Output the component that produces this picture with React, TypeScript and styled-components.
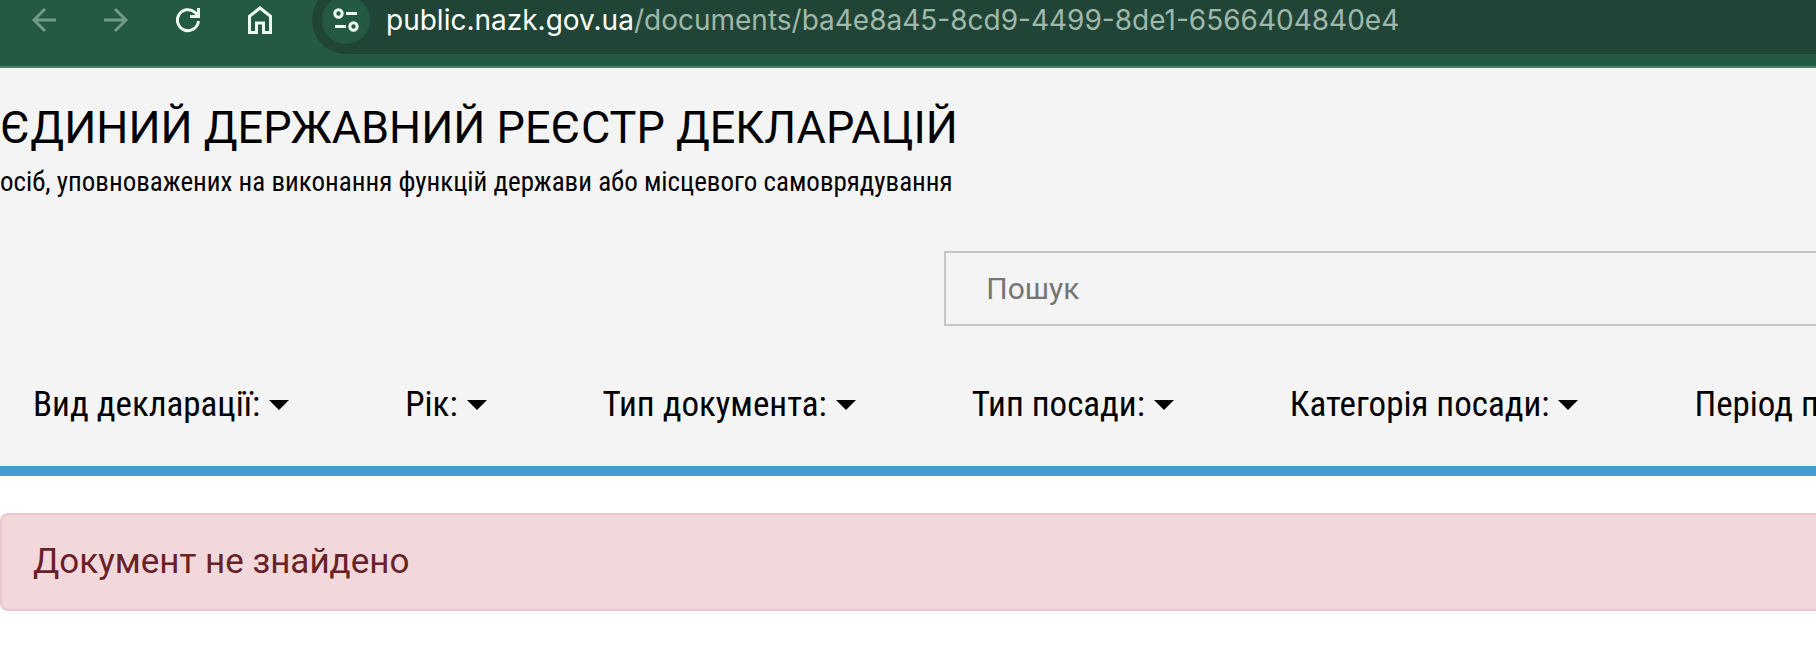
import React from "react";
import styled, { createGlobalStyle } from "styled-components";

const GlobalStyle = createGlobalStyle`
  *, *::before, *::after { box-sizing: border-box; }
  body {
    margin: 0;
    background: #fff;
    color: #000;
    font-family: Roboto, sans-serif;
    overflow-x: hidden;
  }
`;

const condensed = `"Roboto Condensed", Roboto, sans-serif`;

const Toolbar = styled.div`
  display: flex;
  align-items: flex-end;
  height: 68px;
  padding: 0 0 12px 8px;
  border-bottom: 2px solid #4f7e68;
  background: #255a42;
  overflow: hidden;
`;

const ToolButton = styled.button`
  display: flex;
  flex: none;
  align-items: center;
  justify-content: center;
  width: 72px;
  height: 68px;
  padding: 0;
  border: 0;
  background: none;
  color: #effaf3;

  &:disabled { color: #6f9a85; }
`;

const Glyph = styled.svg`
  display: block;
  fill: none;
  stroke: currentColor;
  stroke-width: 3;
`;

const AddressBar = styled.div`
  display: flex;
  flex: 1;
  align-items: center;
  gap: 16px;
  min-width: 0;
  height: 68px;
  margin-left: 16px;
  padding-left: 10px;
  border-radius: 34px 0 0 34px;
  background: #204536;
`;

const SiteInfo = styled.button`
  display: flex;
  flex: none;
  align-items: center;
  justify-content: center;
  width: 48px;
  height: 48px;
  padding: 0;
  border: 0;
  border-radius: 50%;
  background: #255a42;
  color: #effaf3;
`;

const Address = styled.div`
  color: #a0b8ac;
  font: 28px/36px Inter, sans-serif;
  white-space: nowrap;
`;

const Domain = styled.span`
  color: #fff;
`;

const Header = styled.header`
  border-bottom: 10px solid #469ad6;
  background: #f4f4f4;
`;

const Brand = styled.div`
  padding-top: 32px;
`;

const Title = styled.h1`
  margin: 0;
  font-size: 45px;
  font-weight: 400;
  line-height: 56px;
`;

const Subtitle = styled.p`
  margin: 0;
  font: 27px/52px ${condensed};
`;

const SearchInput = styled.input`
  display: block;
  width: 48%;
  height: 75px;
  margin: 43px 0 0 52%;
  padding: 0 40px;
  border: 2px solid #c6c6c6;
  border-right: 0;
  border-radius: 0;
  background: transparent;
  font: 30px Roboto, sans-serif;
  outline: 0;

  &::placeholder { color: #757575; opacity: 1; }
`;

const Filters = styled.nav`
  display: flex;
  gap: 116px;
  padding: 53px 0 35px 33px;
  overflow: hidden;
`;

const FilterButton = styled.button`
  display: flex;
  flex: none;
  align-items: center;
  gap: 9px;
  padding: 0;
  border: 0;
  background: none;
  color: #000;
  font: 35px/52px ${condensed};

  &::after {
    content: "";
    border: 10px solid transparent;
    border-top-color: currentColor;
    border-bottom: 0;
  }
`;

const Alert = styled.div`
  margin-top: 37px;
  padding: 20px 31px;
  border: 2px solid #ebc8cd;
  border-right: 0;
  border-radius: 8px 0 0 8px;
  background: #f2d8db;
  color: #672228;
  font-size: 35px;
  line-height: 54px;
`;

const filters = [
  "Вид декларації:",
  "Рік:",
  "Тип документа:",
  "Тип посади:",
  "Категорія посади:",
  "Період подання:",
];

export default function App() {
  return (
    <>
      <GlobalStyle />
      <Toolbar>
        <ToolButton aria-label="Назад" disabled>
          <Glyph width="26" height="26" viewBox="0 0 26 26">
            <path d="M25 13H3M14 2L3 13l11 11" />
          </Glyph>
        </ToolButton>
        <ToolButton aria-label="Вперед" disabled>
          <Glyph width="26" height="26" viewBox="0 0 26 26">
            <path d="M1 13h22M12 2l11 11-11 11" />
          </Glyph>
        </ToolButton>
        <ToolButton aria-label="Оновити">
          <Glyph width="28" height="28" viewBox="0 0 28 28">
            <path d="M24.4 15A10.5 10.5 0 1 1 21 6.4L23 8.5" />
            <path d="M24.5 2v8.5H16" />
          </Glyph>
        </ToolButton>
        <ToolButton aria-label="Головна">
          <Glyph width="28" height="28" viewBox="0 0 28 28">
            <path d="M3.5 26.5V10.3L14 2l10.5 8.3V26.5H17.5V17h-7V26.5Z" />
          </Glyph>
        </ToolButton>
        <AddressBar>
          <SiteInfo aria-label="Відомості про сайт">
            <Glyph width="26" height="26" viewBox="0 0 26 26">
              <circle cx="5.5" cy="6.5" r="3.7" />
              <path d="M13 6.5h11M2 19.5h11" />
              <circle cx="20.5" cy="19.5" r="3.7" />
            </Glyph>
          </SiteInfo>
          <Address>
            <Domain>public.nazk.gov.ua</Domain>/documents/ba4e8a45-8cd9-4499-8de1-6566404840e4
          </Address>
        </AddressBar>
      </Toolbar>
      <Header>
        <Brand>
          <Title>ЄДИНИЙ ДЕРЖАВНИЙ РЕЄСТР ДЕКЛАРАЦІЙ</Title>
          <Subtitle>осіб, уповноважених на виконання функцій держави або місцевого самоврядування</Subtitle>
        </Brand>
        <SearchInput type="search" placeholder="Пошук" aria-label="Пошук" />
        <Filters aria-label="Фільтри">
          {filters.map((label) => (
            <FilterButton key={label} type="button" aria-haspopup="menu">
              {label}
            </FilterButton>
          ))}
        </Filters>
      </Header>
      <main>
        <Alert role="alert">Документ не знайдено</Alert>
      </main>
    </>
  );
}
